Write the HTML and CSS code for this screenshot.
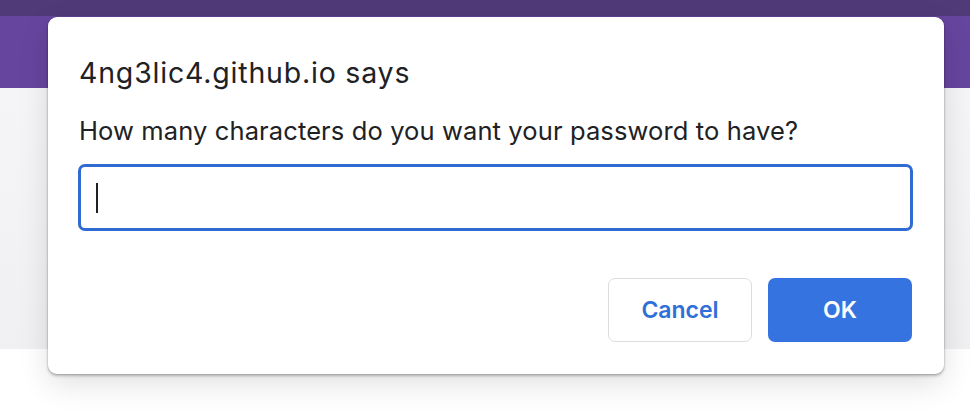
FILE: index.html
```html
<!DOCTYPE html>
<html>
<head>
<meta charset="utf-8">
<link rel="stylesheet" href="styles.css">
</head>
<body>
<div class="page">
  <div class="topbar"></div>
  <div class="header"></div>
  <div class="band"></div>
  <div class="rest"></div>
</div>
<div class="dialog">
  <div class="title">4ng3lic4.github.io says</div>
  <div class="message">How many characters do you want your password to have?</div>
  <div class="field"><span class="caret"></span></div>
  <div class="actions">
    <button class="btn cancel">Cancel</button>
    <button class="btn ok">OK</button>
  </div>
</div>
</body>
</html>
```

FILE: styles.css
```css
html, body {
  margin: 0;
  padding: 0;
  width: 970px;
  height: 414px;
  overflow: hidden;
  font-family: Inter, "Noto Sans", "Liberation Sans", sans-serif;
}
.page {
  display: flex;
  flex-direction: column;
  height: 414px;
}
.topbar {
  height: 16px;
  background: #503a78;
}
.header {
  height: 72px;
  background: #66459e;
}
.band {
  height: 261px;
  background: linear-gradient(#f5f5f8, #f0f0f3);
}
.rest {
  flex: 1;
  background: #fff;
}
.dialog {
  position: absolute;
  left: 48px;
  top: 17px;
  width: 896px;
  height: 357px;
  box-sizing: border-box;
  background: #fff;
  border-radius: 9px;
  box-shadow: 0 0 0 1px rgba(0,0,0,0.06), 0 2px 3px rgba(0,0,0,0.25), 0 10px 30px rgba(0,0,0,0.12);
  padding: 0 31px 0 31px;
  display: flex;
  flex-direction: column;
}
.title {
  margin-top: 39px;
  font-size: 28.5px;
  line-height: 33px;
  letter-spacing: 0.8px;
  color: #202124;
}
.message {
  margin-top: 27px;
  font-size: 25.5px;
  line-height: 30px;
  letter-spacing: 0.12px;
  color: #202124;
}
.field {
  margin-top: 18px;
  margin-left: -1px;
  height: 67px;
  box-sizing: border-box;
  border: 3px solid #2f6bd0;
  border-radius: 7px;
  display: flex;
  align-items: center;
  padding-left: 15px;
}
.caret {
  width: 2px;
  height: 30px;
  background: #202124;
}
.actions {
  margin-top: 47px;
  margin-right: 1px;
  display: flex;
  justify-content: flex-end;
  gap: 16px;
}
.btn {
  width: 144px;
  height: 64px;
  box-sizing: border-box;
  border-radius: 7px;
  font-family: inherit;
  font-size: 23px;
  font-weight: 600;
}
.cancel {
  background: #fff;
  border: 1px solid #dcdcdc;
  color: #2f6fd8;
}
.ok {
  background: #3574e0;
  border: none;
  color: #fff;
}
```
